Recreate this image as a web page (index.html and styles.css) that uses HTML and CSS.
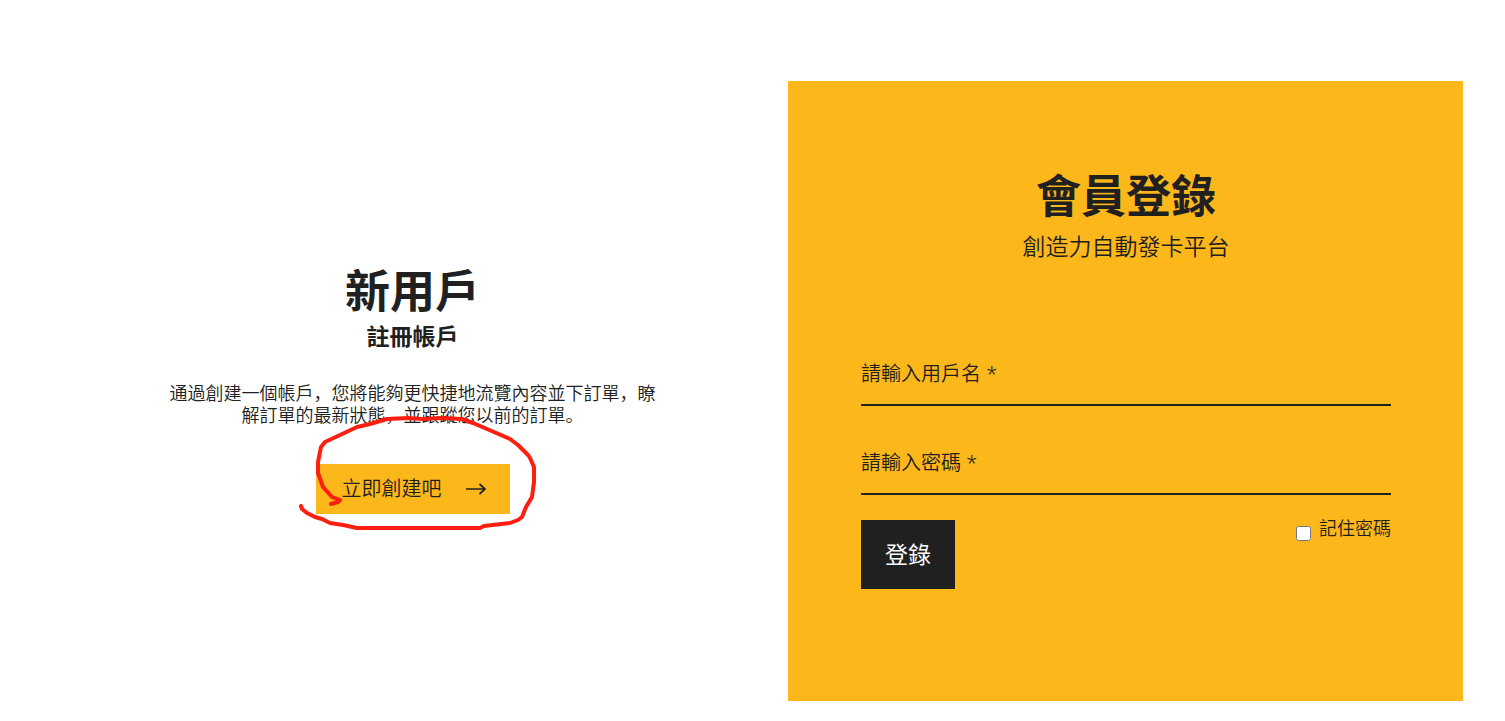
FILE: index.html
```html
<!DOCTYPE html>
<html lang="zh-CN">
<head>
    <meta charset="UTF-8">
    <meta name="viewport" content="width=device-width, initial-scale=1.0">
    <title>會員登錄</title>
    <link rel="stylesheet" href="styles.css">
</head>
<body>

    <main class="container">
        <section class="register">
            <h2>新用戶</h2>
            <h3>註冊帳戶</h3>
            <p>通過創建一個帳戶，您將能夠更快捷地流覽內容並下訂單，瞭解訂單的最新狀態，並跟蹤您以前的訂單。</p>
            <div class="create">
                <a href="#" class="create-btn">
                    立即創建吧
                    <svg class="arrow" width="20" height="14" viewBox="0 0 20 14" fill="none" stroke="currentColor" stroke-width="1.7">
                        <path d="M0 7H19M13.5 2L19 7L13.5 12"/>
                    </svg>
                </a>
                <!-- hand-drawn circle -->
                <svg class="marker" width="244" height="120" viewBox="0 0 244 120">
                    <path d="M5 94L6 97L11 101L19 105L26 107L34 111L47 113L61 116H184L188 114L214 111L222 108L226 105L230 95L236 85L238 70V55L234 46L232 43L222 33L214 27L191 17L177 11L166 7L145 6L127 7L112 6L91 7L74 12L61 15L44 23L29 30L25 35L22 50V61L27 75L36 85L44 88L42 90L35 92"/>
                </svg>
            </div>
        </section>

        <section class="login">
            <h2>會員登錄</h2>
            <p class="subtitle">創造力自動發卡平台</p>
            <form>
                <input type="text" class="field" name="username" placeholder="請輸入用戶名 *" aria-label="用戶名" required>
                <input type="password" class="field" name="password" placeholder="請輸入密碼 *" aria-label="密碼" required>
                <div class="form-row">
                    <button type="submit" class="login-btn">登錄</button>
                    <div class="remember">
                        <input type="checkbox" id="remember">
                        <label for="remember">記住密碼</label>
                    </div>
                </div>
            </form>
        </section>
    </main>

</body>
</html>
```

FILE: styles.css
```css
* {
    box-sizing: border-box;
}
body {
    margin: 0;
    font-family: "Noto Sans", "Noto Sans CJK SC", sans-serif;
    font-size: 18px;
    line-height: 22px;
    font-weight: 350;
    color: #202020;
    background: #fff;
}
h2, h3, p {
    margin: 0;
}
h2 {
    font-size: 45px;
    line-height: 54px;
    font-weight: 700;
}
.container {
    display: grid;
    grid-template-columns: 1fr 1fr;
    gap: 38px;
    align-items: center;
    padding: 81px 42px 20px 75px;
}
.register {
    display: flex;
    flex-direction: column;
    align-items: center;
    padding: 0 90px 4px;
    text-align: center;
}
.register h3 {
    margin: 4px 0 32px;
    font-size: 23px;
    line-height: 28px;
    font-weight: 700;
}
.create {
    position: relative;
    margin-top: 38px;
}
.create-btn {
    display: flex;
    align-items: center;
    gap: 24px;
    height: 50px;
    padding: 0 24px 0 26px;
    background: #fcb71b;
    color: #202020;
    font-size: 20px;
    text-decoration: none;
}
.marker {
    position: absolute;
    top: -52px;
    left: -20px;
    pointer-events: none;
}
.marker path {
    fill: none;
    stroke: #ff1e0f;
    stroke-width: 4;
    stroke-linejoin: round;
    stroke-linecap: round;
}
.login {
    padding: 88px 72px 112px 73px;
    background: #fcb71b;
}
.login h2, .subtitle {
    text-align: center;
}
.subtitle {
    margin: 9px 0 82px;
    font-size: 23px;
    line-height: 28px;
}
.field {
    display: block;
    width: 100%;
    height: 64px;
    margin-bottom: 25px;
    padding: 0;
    border: none;
    border-bottom: 2px solid #202020;
    border-radius: 0;
    background: transparent;
    color: #202020;
    font: inherit;
    font-size: 20px;
    outline: none;
}
.field::placeholder {
    color: #202020;
    opacity: 1;
}
.form-row {
    display: flex;
    justify-content: space-between;
    align-items: flex-start;
}
.login-btn {
    height: 69px;
    padding: 0 24px 2px;
    border: none;
    background: #202020;
    color: #fff;
    font: inherit;
    font-size: 23px;
    font-weight: 400;
    cursor: pointer;
}
.remember {
    display: flex;
    align-items: flex-start;
    gap: 8px;
}
.remember label {
    line-height: 16px;
}
.remember input {
    width: 15px;
    height: 15px;
    margin: 6px 0 0;
}
```
